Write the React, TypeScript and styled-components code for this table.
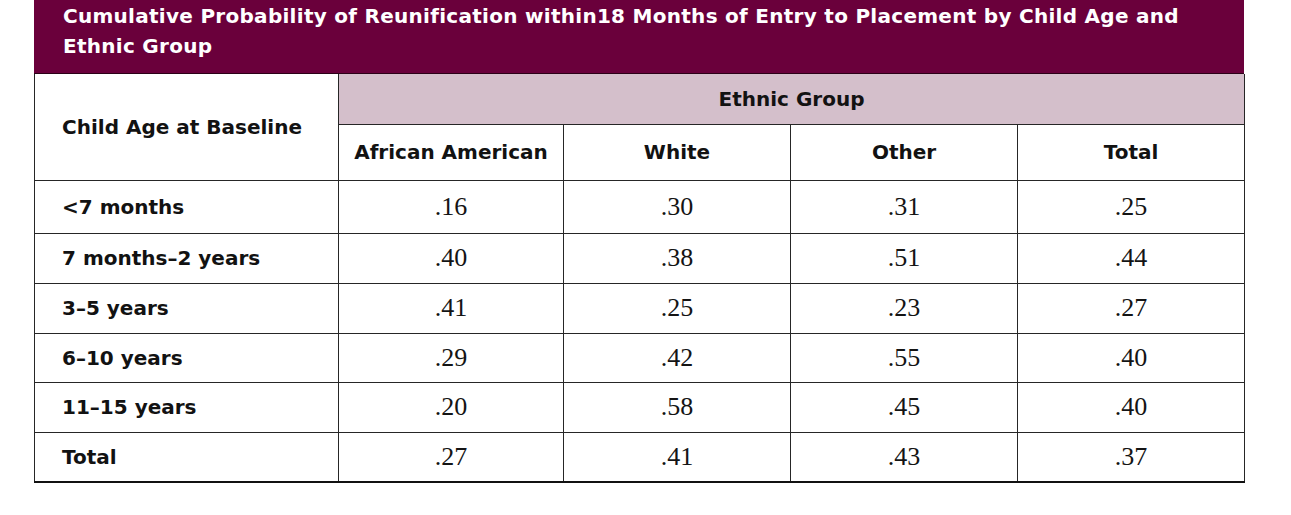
import React from "react";
import styled, { createGlobalStyle } from "styled-components";

const GlobalStyle = createGlobalStyle`
  html, body {
    margin: 0;
    padding: 0;
    background: #ffffff;
  }
`;

const Page = styled.div`
  padding-left: 34px;
  width: 1257px;
`;

const Figure = styled.div`
  width: 1210px;
`;

const Caption = styled.div`
  box-sizing: border-box;
  height: 74px;
  background: #6a003b;
  color: #ffffff;
  font-family: "DejaVu Sans", "Liberation Sans", sans-serif;
  font-weight: 700;
  font-size: 20px;
  line-height: 30px;
  letter-spacing: 0.28px;
  padding: 1px 30px 0 29px;
  border-bottom: 1px solid #2b0017;
`;

const Table = styled.table`
  width: 1210px;
  border-collapse: collapse;
  table-layout: fixed;
  border-left: 1.5px solid #1c1c1c;
  border-right: 1.5px solid #1c1c1c;
  border-bottom: 2px solid #111;
`;

const Row = styled.tr<{ $h: number }>`
  height: ${(p) => p.$h}px;
`;

const HeadCell = styled.th<{ $shade?: boolean; $left?: boolean }>`
  font-family: "DejaVu Sans", "Liberation Sans", sans-serif;
  font-weight: 700;
  font-size: 20px;
  color: #121212;
  text-align: ${(p) => (p.$left ? "left" : "center")};
  padding: ${(p) => (p.$left ? "0 0 0 27px" : "0")};
  background: ${(p) => (p.$shade ? "#d4bfcb" : "#ffffff")};
  border: 1px solid #262626;
  border-top: none;
`;

const Label = styled.td`
  font-family: "DejaVu Sans", "Liberation Sans", sans-serif;
  font-weight: 700;
  font-size: 20px;
  color: #121212;
  padding: 0 0 0 27px;
  border: 1px solid #262626;
`;

const Value = styled.td`
  font-family: "Liberation Serif", "Times New Roman", serif;
  font-size: 26px;
  color: #141414;
  text-align: center;
  border: 1px solid #262626;
`;

const groups = ["African American", "White", "Other", "Total"];

const rows: { label: string; values: string[]; h: number }[] = [
  { label: "<7 months", values: [".16", ".30", ".31", ".25"], h: 53 },
  { label: "7 months–2 years", values: [".40", ".38", ".51", ".44"], h: 50 },
  { label: "3–5 years", values: [".41", ".25", ".23", ".27"], h: 50 },
  { label: "6–10 years", values: [".29", ".42", ".55", ".40"], h: 49 },
  { label: "11–15 years", values: [".20", ".58", ".45", ".40"], h: 50 },
  { label: "Total", values: [".27", ".41", ".43", ".37"], h: 50 },
];

export default function App() {
  return (
    <Page>
      <GlobalStyle />
      <Figure>
        <Caption>
          Cumulative Probability of Reunification within18 Months of Entry to Placement by Child Age and
          Ethnic Group
        </Caption>
        <Table>
          <colgroup>
            <col style={{ width: 304 }} />
            <col style={{ width: 225 }} />
            <col style={{ width: 227 }} />
            <col style={{ width: 227 }} />
            <col style={{ width: 227 }} />
          </colgroup>
          <thead>
            <Row $h={50}>
              <HeadCell rowSpan={2} $left>
                Child Age at Baseline
              </HeadCell>
              <HeadCell colSpan={4} $shade>
                Ethnic Group
              </HeadCell>
            </Row>
            <Row $h={56}>
              {groups.map((g) => (
                <HeadCell key={g}>{g}</HeadCell>
              ))}
            </Row>
          </thead>
          <tbody>
            {rows.map((r) => (
              <Row key={r.label} $h={r.h}>
                <Label>{r.label}</Label>
                {r.values.map((v, i) => (
                  <Value key={i}>{v}</Value>
                ))}
              </Row>
            ))}
          </tbody>
        </Table>
      </Figure>
    </Page>
  );
}
